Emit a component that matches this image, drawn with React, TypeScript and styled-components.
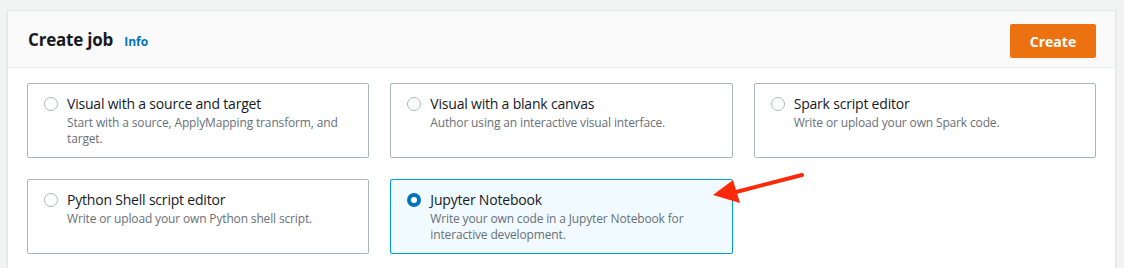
import React, { useState } from "react";
import styled, { createGlobalStyle } from "styled-components";

const GlobalStyle = createGlobalStyle`
  html, body {
    margin: 0;
    padding: 0;
    background: #f2f3f3;
    font-family: "Open Sans", "Noto Sans", Arial, sans-serif;
    -webkit-font-smoothing: antialiased;
  }
`;

type JobOption = {
  id: string;
  title: string;
  description: string;
};

const OPTIONS: JobOption[] = [
  {
    id: "visual-source",
    title: "Visual with a source and target",
    description: "Start with a source, ApplyMapping transform, and target.",
  },
  {
    id: "visual-blank",
    title: "Visual with a blank canvas",
    description: "Author using an interactive visual interface.",
  },
  {
    id: "spark",
    title: "Spark script editor",
    description: "Write or upload your own Spark code.",
  },
  {
    id: "python-shell",
    title: "Python Shell script editor",
    description: "Write or upload your own Python shell script.",
  },
  {
    id: "jupyter",
    title: "Jupyter Notebook",
    description:
      "Write your own code in a Jupyter Notebook for interactive development.",
  },
];

const App: React.FC = () => {
  const [selected, setSelected] = useState("jupyter");

  return (
    <>
      <GlobalStyle />
      <Page>
        <Panel>
          {/* header */}
          <Header>
            <TitleGroup>
              <Title>Create job</Title>
              <InfoLink href="#">Info</InfoLink>
            </TitleGroup>
            <CreateButton type="button">Create</CreateButton>
          </Header>

          {/* tiles */}
          <Body>
            <TileGrid>
              {OPTIONS.map((opt) => {
                const isActive = selected === opt.id;
                return (
                  <Tile
                    key={opt.id}
                    $active={isActive}
                    onClick={() => setSelected(opt.id)}
                  >
                    <Radio $checked={isActive} />
                    <TileText>
                      <TileTitle>{opt.title}</TileTitle>
                      <TileDesc>{opt.description}</TileDesc>
                    </TileText>
                  </Tile>
                );
              })}
            </TileGrid>
          </Body>
        </Panel>

        {/* annotation arrow */}
        <Arrow width="110" height="45" viewBox="0 0 110 45">
          <line
            x1="94"
            y1="5"
            x2="28"
            y2="22"
            stroke="#fa2a0a"
            strokeWidth="4"
            strokeLinecap="round"
          />
          <polygon points="5,25 25,10 32,33" fill="#fa2a0a" />
        </Arrow>
      </Page>
    </>
  );
};

export default App;

const Page = styled.div`
  position: relative;
  padding: 10px 8px 0 7px;
  height: 268px;
  box-sizing: border-box;
  overflow: hidden;
`;

const Panel = styled.div`
  background: #ffffff;
  border: 1px solid #e4e7e7;
  border-bottom: none;
  box-shadow: 0 1px 1px 0 rgba(0, 28, 36, 0.15);
  height: 280px;
`;

const Header = styled.div`
  display: flex;
  align-items: center;
  justify-content: space-between;
  background: #fafafa;
  border-bottom: 1px solid #eaeded;
  height: 57px;
  padding: 0 19px 0 20px;
  box-sizing: border-box;
`;

const TitleGroup = styled.div`
  display: flex;
  align-items: baseline;
  gap: 11px;
`;

const Title = styled.h2`
  margin: 0;
  font-size: 17px;
  font-weight: 700;
  color: #16191f;
  letter-spacing: -0.2px;
`;

const InfoLink = styled.a`
  font-size: 12px;
  font-weight: 700;
  color: #0073bb;
  text-decoration: none;
`;

const CreateButton = styled.button`
  width: 86px;
  height: 34px;
  margin-top: 4px;
  background: #ec7211;
  border: none;
  border-radius: 2px;
  color: #ffffff;
  font-family: inherit;
  font-size: 14px;
  font-weight: 700;
  cursor: pointer;
`;

const Body = styled.div`
  padding: 15px 19px 0 19px;
`;

const TileGrid = styled.div`
  display: grid;
  grid-template-columns: repeat(3, 1fr);
  column-gap: 21px;
  row-gap: 21px;
`;

const Tile = styled.div<{ $active: boolean }>`
  display: flex;
  align-items: flex-start;
  gap: 9px;
  min-height: 75px;
  box-sizing: border-box;
  padding: 9px 16px 10px 16px;
  border: 1px solid ${(p) => (p.$active ? "#00a1c9" : "#aab7b8")};
  background: ${(p) => (p.$active ? "#f1faff" : "#ffffff")};
  border-radius: 2px;
  cursor: pointer;
`;

const Radio = styled.span<{ $checked: boolean }>`
  flex: none;
  width: 14px;
  height: 14px;
  margin-top: 4px;
  box-sizing: border-box;
  border-radius: 50%;
  background: #ffffff;
  border: ${(p) => (p.$checked ? "4px solid #0073bb" : "1.5px solid #aab7b8")};
`;

const TileText = styled.div`
  display: flex;
  flex-direction: column;
`;

const TileTitle = styled.div`
  font-size: 14px;
  line-height: 22px;
  color: #16191f;
  letter-spacing: -0.2px;
`;

const TileDesc = styled.div`
  font-size: 12px;
  line-height: 16px;
  color: #687078;
  letter-spacing: -0.15px;
`;

const Arrow = styled.svg`
  position: absolute;
  left: 708px;
  top: 170px;
`;
